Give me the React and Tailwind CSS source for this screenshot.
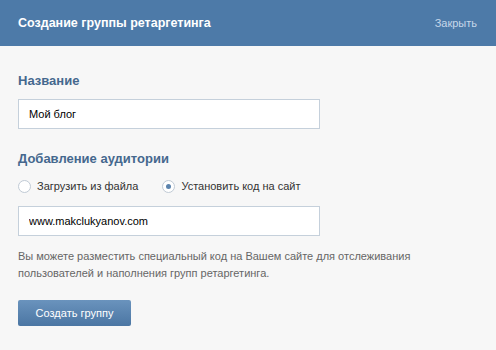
export default function App() {
  return (
    <div className="h-[350px] w-[496px] bg-[#f7f7f7] font-['Liberation_Sans',Arial,sans-serif]">
      <header className="flex h-[46px] items-center justify-between bg-[#4d7aa8] pl-[18px] pr-[19px]">
        <span className="text-[12.5px] font-bold text-white">Создание группы ретаргетинга</span>
        <button className="text-[11px] text-[#c6d7ea]">Закрыть</button>
      </header>

      <div className="px-[18px] pt-[25px]">
        <div className="text-[13px] font-bold text-[#45688e]">Название</div>
        <input
          defaultValue="Мой блог"
          className="mt-[8px] block h-[30px] w-[302px] border border-[#c5d0db] bg-white px-[10px] text-[11px] text-black outline-none"
        />

        <div className="mt-[20px] text-[13px] font-bold text-[#45688e]">Добавление аудитории</div>
        <div className="mt-[9px] flex h-[18px] items-center text-[11px] text-[#333]">
          <label className="flex items-center gap-[6px]">
            <span className="h-[13px] w-[13px] rounded-full border border-[#c0cad5] bg-white" />
            Загрузить из файла
          </label>
          <label className="ml-[24px] flex items-center gap-[6px]">
            <span className="flex h-[13px] w-[13px] items-center justify-center rounded-full border border-[#c0cad5] bg-white">
              <span className="h-[5px] w-[5px] rounded-full bg-[#5b83ad]" />
            </span>
            Установить код на сайт
          </label>
        </div>

        <input
          defaultValue="www.makclukyanov.com"
          className="mt-[11px] block h-[30px] w-[302px] border border-[#c5d0db] bg-white px-[10px] text-[11px] text-black outline-none"
        />

        <p className="mt-[12px] text-[11px] leading-[17px] text-[#666]">
          Вы можете разместить специальный код на Вашем сайте для отслеживания
          <br />
          пользователей и наполнения групп ретаргетинга.
        </p>

        <button className="mt-[18px] h-[26px] w-[113px] rounded-[2px] bg-gradient-to-b from-[#6a93bd] to-[#4b76a3] text-[11px] text-white">
          Создать группу
        </button>
      </div>
    </div>
  );
}
